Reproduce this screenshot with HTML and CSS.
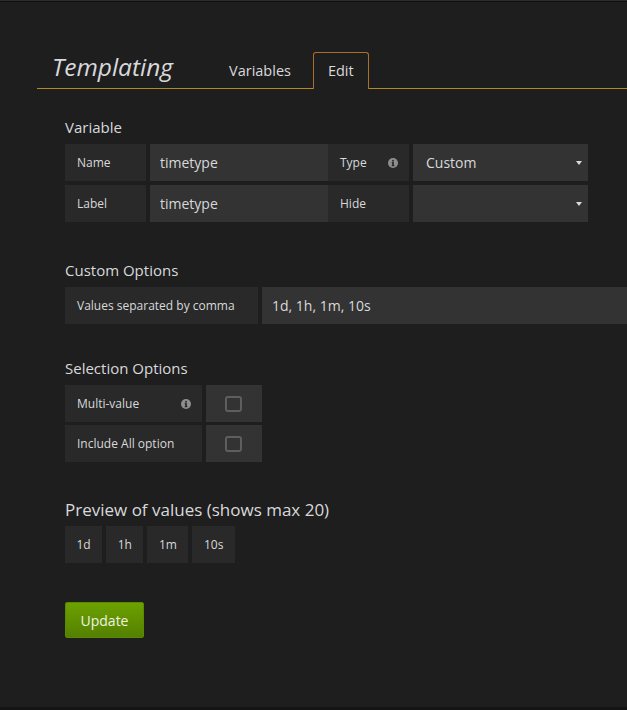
FILE: index.html
```html
<!DOCTYPE html>
<html>
<head>
<meta charset="utf-8">
<link rel="stylesheet" href="styles.css">
</head>
<body>
<div class="page">
  <div class="header">
    <h1 class="title">Templating</h1>
    <div class="tab">Variables</div>
    <div class="tab active">Edit</div>
  </div>
  <div class="content">
    <h5 class="section-title first">Variable</h5>
    <div class="form-row">
      <div class="label w81">Name</div>
      <div class="input w178">timetype</div>
      <div class="label w81">Type <svg class="info" viewBox="0 0 10 10"><circle cx="5" cy="5" r="5" fill="#8e8e8e"/><rect x="4.2" y="4.2" width="1.7" height="3.8" fill="#292929"/><rect x="3.6" y="7.3" width="2.9" height="0.9" fill="#292929"/><rect x="3.6" y="4.2" width="1.6" height="0.9" fill="#292929"/><circle cx="5" cy="2.7" r="0.95" fill="#292929"/></svg></div>
      <div class="select w175">Custom<span class="caret"></span></div>
    </div>
    <div class="form-row">
      <div class="label w81">Label</div>
      <div class="input w178">timetype</div>
      <div class="label w81">Hide</div>
      <div class="select w175"><span></span><span class="caret"></span></div>
    </div>

    <h5 class="section-title custom">Custom Options</h5>
    <div class="form-row">
      <div class="label w193">Values separated by comma</div>
      <div class="input grow">1d, 1h, 1m, 10s</div>
    </div>

    <h5 class="section-title selection">Selection Options</h5>
    <div class="form-row tight">
      <div class="label w137">Multi-value <svg class="info" viewBox="0 0 10 10"><circle cx="5" cy="5" r="5" fill="#8e8e8e"/><rect x="4.2" y="4.2" width="1.7" height="3.8" fill="#292929"/><rect x="3.6" y="7.3" width="2.9" height="0.9" fill="#292929"/><rect x="3.6" y="4.2" width="1.6" height="0.9" fill="#292929"/><circle cx="5" cy="2.7" r="0.95" fill="#292929"/></svg></div>
      <div class="check-cell"><span class="checkbox"></span></div>
    </div>
    <div class="form-row">
      <div class="label w137">Include All option</div>
      <div class="check-cell"><span class="checkbox"></span></div>
    </div>

    <h5 class="preview-title">Preview of values (shows max 20)</h5>
    <div class="tags">
      <span class="tag">1d</span>
      <span class="tag">1h</span>
      <span class="tag">1m</span>
      <span class="tag">10s</span>
    </div>

    <button class="btn-update">Update</button>
  </div>
</div>
</body>
</html>
```

FILE: styles.css
```css
html {
  background: #141414;
}
body {
  margin: 0;
  font-family: "Open Sans", "Noto Sans", sans-serif;
  color: #d8d9da;
  overflow: hidden;
}
.page {
  box-sizing: border-box;
  height: 707px;
  background: #1f1e1f;
  border-top: 1px solid #2c2c2c;
  box-shadow: inset 0 1px 0 #111111;
}
.header {
  display: flex;
  align-items: baseline;
  margin-left: 37px;
  padding-top: 51px;
  border-bottom: 1px solid #b38a20;
}
.title {
  margin: 0;
  width: 177px;
  flex: none;
  padding-left: 15px;
  box-sizing: border-box;
  font-size: 24.5px;
  font-style: italic;
  font-weight: 400;
  line-height: 26px;
  color: #d8d9da;
}
.tab {
  box-sizing: border-box;
  height: 37px;
  line-height: 36px;
  padding: 0 14px;
  font-size: 14.5px;
  border: 1px solid transparent;
  border-bottom: none;
  border-radius: 3px 3px 0 0;
  margin-bottom: -1px;
  margin-right: 7px;
  color: #d8d9da;
}
.tab.active {
  border-color: #a8702a;
  background: #1f1e1f;
}
.content {
  padding-left: 65px;
}
.section-title {
  margin: 0 0 7px 0;
  font-size: 15px;
  font-weight: 400;
  line-height: 20px;
  color: #d8d9da;
}
.section-title.first { margin-top: 28px; }
.section-title.custom { margin-top: 38px; }
.section-title.selection { margin-top: 34px; }
.form-row {
  display: flex;
  height: 37px;
  margin-bottom: 4px;
}
.form-row.tight { margin-bottom: 3px; }
.label {
  box-sizing: border-box;
  display: flex;
  align-items: center;
  justify-content: space-between;
  padding: 0 11px 0 12px;
  margin-right: 4px;
  background: #292929;
  font-size: 12px;
  color: #d8d9da;
}
.w81 { width: 81px; }
.w137 { width: 137px; }
.w193 { width: 193px; }
.input {
  box-sizing: border-box;
  display: flex;
  align-items: center;
  padding: 0 10px;
  background: #333333;
  font-size: 14px;
  color: #d8d9da;
}
.w178 { width: 178px; }
.grow { flex: 1; }
.select {
  box-sizing: border-box;
  width: 175px;
  display: flex;
  align-items: center;
  justify-content: space-between;
  padding: 0 6px 0 13px;
  background: #333333;
  font-size: 14px;
  color: #d8d9da;
}
.caret {
  width: 0;
  height: 0;
  border-left: 3.5px solid transparent;
  border-right: 3.5px solid transparent;
  border-top: 4px solid #d8d9da;
  margin-top: 1px;
}
.info {
  width: 10px;
  height: 10px;
}
.check-cell {
  width: 56px;
  display: flex;
  align-items: center;
  justify-content: center;
  background: #333333;
}
.checkbox {
  box-sizing: border-box;
  width: 17px;
  height: 16px;
  border: 2px solid #5e5e5e;
  border-radius: 3px;
  margin-right: 1px;
}
.preview-title {
  margin: 37px 0 5px 0;
  font-size: 17px;
  font-weight: 400;
  line-height: 22px;
  color: #d8d9da;
}
.tags {
  display: flex;
  gap: 4px;
}
.tag {
  height: 37px;
  line-height: 37px;
  padding: 0 11.5px;
  background: #292929;
  font-size: 12px;
  color: #d8d9da;
}
.btn-update {
  display: block;
  margin-top: 39px;
  width: 79px;
  height: 36px;
  padding: 0;
  border: 1px solid #5a8a00;
  border-radius: 2px;
  background: linear-gradient(#6ca100, #548000);
  font-family: "Open Sans", "Noto Sans", sans-serif;
  font-size: 14px;
  color: #eef3e4;
}
```
